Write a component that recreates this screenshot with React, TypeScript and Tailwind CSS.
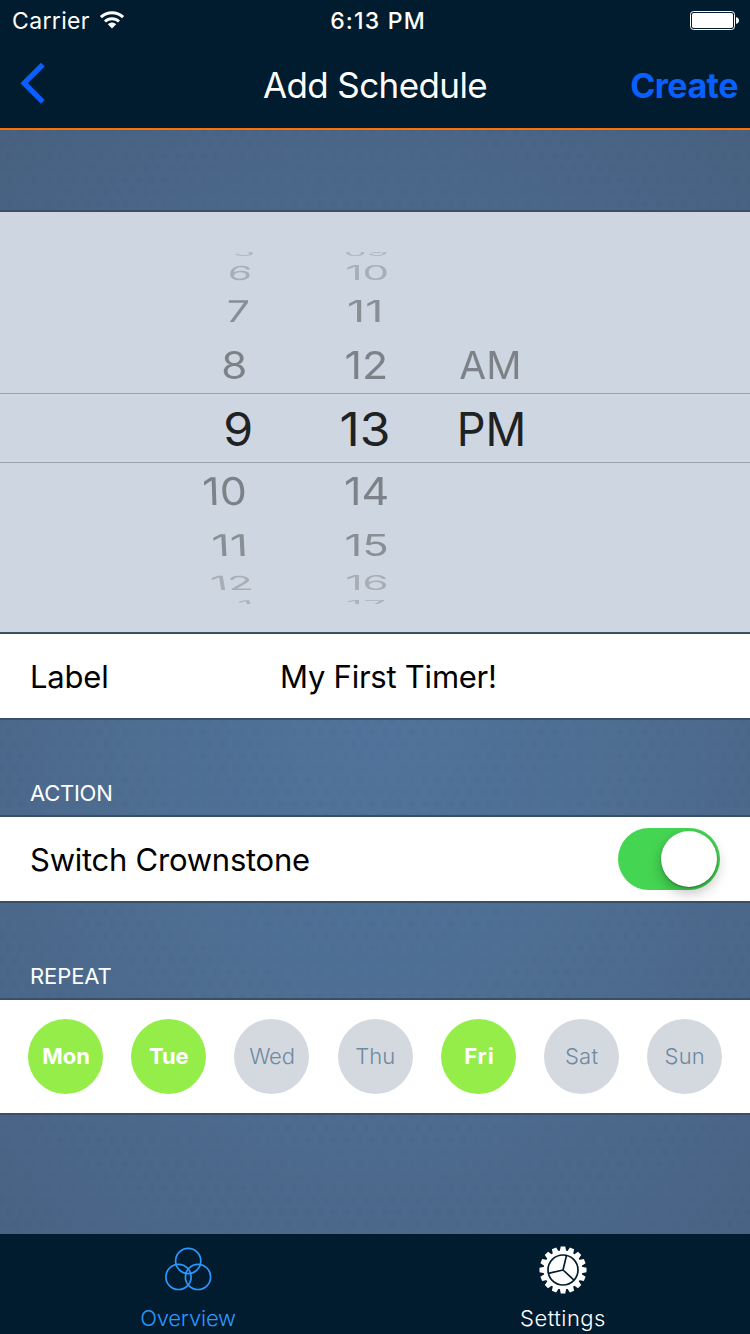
import React from 'react';

type Cell = { text: string; dx?: number; sx?: number; skew?: number };
type WheelRow = {
  height: number;
  dy: number;
  sy: number;
  opacity: number;
  selected?: boolean;
  gapBefore?: number;
  cells: [Cell, Cell, Cell];
};

const none: Cell = { text: '' };

const wheel: WheelRow[] = [
  { height: 4, dy: -2.5, sy: 0.27, opacity: 0.3, cells: [{ text: '5', dx: 4, sx: 0.95 }, { text: '09', dx: 1, sx: 0.92 }, none] },
  { height: 34, dy: -0.5, sy: 0.5, opacity: 0.4, cells: [{ text: '6', dx: 0, skew: -6 }, { text: '10', dx: 2, sx: 1.08 }, none] },
  { height: 42, dy: -0.3, sy: 0.77, opacity: 0.72, cells: [{ text: '7', dx: -2, skew: -3, sx: 1.05 }, { text: '11', dx: 0.3, sx: 1.14 }, none] },
  { height: 61, dy: 2.3, sy: 0.99, opacity: 0.85, cells: [{ text: '8', dx: -5.7, sx: 1.08 }, { text: '12', dx: 1.5, sx: 1.1 }, { text: 'AM', dx: 0.3 }] },
  { height: 68, dy: 0.5, sy: 1, opacity: 1, selected: true, cells: [{ text: '9', dx: -2, sx: 1.05 }, { text: '13', dx: 0.5, sx: 1.08 }, { text: 'PM', dx: 1, sx: 0.98 }] },
  { height: 55, dy: 0, sy: 0.98, opacity: 0.85, cells: [{ text: '10', dx: -15.7, sx: 1.1, skew: 2 }, { text: '14', dx: 2, sx: 1.1 }, none] },
  { height: 54, dy: -0.5, sy: 0.77, opacity: 0.72, cells: [{ text: '11', dx: -10, sx: 1.14, skew: 3 }, { text: '15', dx: 1.8, sx: 1.12 }, none] },
  { height: 22, dy: -0.3, sy: 0.5, opacity: 0.4, cells: [{ text: '12', dx: -8, sx: 1.08, skew: 10 }, { text: '16', dx: 2, sx: 1.08 }, none] },
  { height: 4, dy: 2, sy: 0.27, opacity: 0.35, gapBefore: 6, cells: [{ text: '1', dx: 6, skew: 20 }, { text: '17', dx: 1, sx: 1.05 }, none] },
];

const days = [
  { name: 'Mon', on: true, track: 'pl-px tracking-normal' },
  { name: 'Tue', on: true, track: 'tracking-[-0.15px]' },
  { name: 'Wed', on: false, track: 'tracking-[-0.2px]' },
  { name: 'Thu', on: false, track: 'tracking-normal' },
  { name: 'Fri', on: true, track: 'pl-0.5 tracking-[0.9px]' },
  { name: 'Sat', on: false, track: 'tracking-[0.2px]' },
  { name: 'Sun', on: false, track: 'tracking-[0.2px]' },
];

function Picker() {
  return (
    <div className="h-[424px] shrink-0 border-y-2 border-[#3a4f67] bg-[#ced6e1] pt-10 text-[#1f2223]">
      {wheel.map((row, i) => (
        <div
          key={i}
          className={
            row.selected
              ? 'box-content grid grid-cols-[200px_80px_50px_70px_55px_70px] overflow-hidden border-y border-[#98a1ad] text-[46px]'
              : 'grid grid-cols-[200px_80px_50px_70px_55px_70px] overflow-hidden text-[39px] text-[#6e7478]'
          }
          style={{ height: row.height, marginTop: row.gapBefore ?? 0 }}
        >
          {row.cells.map((cell, c) => (
            <React.Fragment key={c}>
              <div />
              <div className="flex items-center justify-center" style={{ height: row.height }}>
                <span
                  className="block leading-none whitespace-nowrap"
                  style={{
                    opacity: row.opacity,
                    transform: `translate(${cell.dx ?? 0}px, ${row.dy}px) skewX(${cell.skew ?? 0}deg) scale(${cell.sx ?? 1}, ${row.sy})`,
                  }}
                >
                  {cell.text}
                </span>
              </div>
            </React.Fragment>
          ))}
        </div>
      ))}
    </div>
  );
}

function WifiIcon() {
  return (
    <svg className="mb-0.5 ml-[9px] h-[19px] w-[26px]" viewBox="0 0 26 19" fill="none" stroke="#fff">
      <path d="M1.9 7.1a16.1 16.1 0 0 1 22.2 0" strokeWidth="3" />
      <path d="M6 11.5a10.2 10.2 0 0 1 14 0" strokeWidth="2.9" />
      <path d="M13 18.6 8.8 14.2a6.2 6.2 0 0 1 8.4 0Z" fill="#fff" stroke="none" />
    </svg>
  );
}

function BatteryIcon() {
  return (
    <svg className="h-5 w-[50px]" viewBox="0 0 50 20">
      <rect x="0.5" y="1.5" width="44" height="18" rx="3" fill="none" stroke="#fff" />
      <rect x="2" y="3" width="41" height="15" rx="1.8" fill="#fff" />
      <path d="M46 7.2c1.8.2 3 1.5 3 3.3s-1.2 3.1-3 3.3Z" fill="#fff" />
    </svg>
  );
}

function GearIcon() {
  return (
    <svg className="size-12" viewBox="-24 -24 48 48">
      <circle r="19.4" fill="#fff" />
      {Array.from({ length: 16 }, (_, i) => (
        <path key={i} d="M-3.2 -18.5L-2.3 -23.5H2.3L3.2 -18.5Z" fill="#fff" transform={`rotate(${i * 22.5})`} />
      ))}
      <g fill="none" stroke="#001c2e" strokeWidth="1.7">
        <circle r="15" />
        <path d="M0 0 3.5 -14.6M0 0-14.6 3.4M0 0 11 10.2" />
      </g>
    </svg>
  );
}

function CirclesIcon() {
  return (
    <svg className="size-12" viewBox="0 0 48 48" fill="none" stroke="#2b97ff" strokeWidth="1.7">
      <circle cx="24.2" cy="15" r="12.6" />
      <circle cx="14.5" cy="30.9" r="12.6" />
      <circle cx="34" cy="30.9" r="12.6" />
    </svg>
  );
}

export default function App() {
  return (
    <div className="relative isolate flex h-[1334px] w-[750px] flex-col overflow-hidden bg-[radial-gradient(ellipse_680px_900px_at_375px_730px,#51739b_0%,#4e6e92_35%,#4a6587_68%,#465e7c_100%)] font-['Inter',sans-serif] text-white">
      <div className="absolute inset-0 -z-10 bg-[radial-gradient(circle,#35527855_0_3px,transparent_3.8px),radial-gradient(circle,#35527855_0_3px,transparent_3.8px)] bg-[length:13px_24px] bg-[position:2px_0px,8.5px_12px] opacity-25 [mask-image:repeating-radial-gradient(circle_at_375px_620px,#000_0px,#0003_50px,#000_100px)]" />

      <header className="h-[130px] shrink-0 border-b-2 border-[#fd7003] bg-[#001c2e]">
        <div className="grid h-10 grid-cols-3 items-center pr-[10px] pl-3">
          <div className="flex items-center">
            <span className="pt-px text-[23px] leading-[40px] tracking-[0.35px]">Carrier</span>
            <WifiIcon />
          </div>
          <span className="pt-px pl-1 text-center text-[23px] leading-[40px] font-medium tracking-[1.2px]">6:13 PM</span>
          <div className="flex justify-end pb-0.5">
            <BatteryIcon />
          </div>
        </div>
        <div className="grid h-[88px] grid-cols-[200px_350px_200px]">
          <svg className="mt-[22px] ml-[18px] h-[42px] w-7" viewBox="0 0 28 42" fill="none" stroke="#0a60ff" strokeWidth="5.3">
            <path d="M24.8 2.6 6.2 21.2 24.8 39.9" />
          </svg>
          <h1 className="text-center text-[35px] leading-[90px] tracking-[-0.6px]">Add Schedule</h1>
          <span className="pr-[12px] text-right text-[34px] leading-[91px] font-bold tracking-[-0.5px] text-[#0a60ff]">Create</span>
        </div>
      </header>

      <div className="h-20 shrink-0" />
      <Picker />

      <div className="flex h-[86px] shrink-0 items-center border-b-2 border-[#3a4f67] bg-white text-[31px] text-black">
        <span className="w-[280px] pt-0.5 pl-[30px] tracking-[-0.2px]">Label</span>
        <span className="pt-0.5 tracking-[-0.24px]">My First Timer!</span>
      </div>

      <div className="flex h-[95px] shrink-0 items-end pb-[5px] pl-[30px] text-[22px] leading-[34px] tracking-[-0.25px]">ACTION</div>

      <div className="flex h-[88px] shrink-0 items-center justify-between border-y-2 border-[#3a4f67] bg-white pr-[30px] pl-[30px] text-[31px] text-black">
        <span className="pt-0.5 tracking-[-0.25px]">Switch Crownstone</span>
        <div className="flex h-[62px] w-[102px] items-center justify-end rounded-full bg-[#44d552] pr-[3px]">
          <div className="size-[56.5px] rounded-full bg-white shadow-[0_1px_2px_rgba(0,0,0,0.3),0_6px_14px_rgba(0,0,0,0.26)]" />
        </div>
      </div>

      <div className="flex h-[95px] shrink-0 items-end pb-[5px] pl-[30px] text-[22px] leading-[34px] tracking-[-0.1px]">REPEAT</div>

      <div className="flex h-[117px] shrink-0 items-center justify-between border-y-2 border-[#3a4f67] bg-white pr-[27.7px] pl-7">
        {days.map((d) => (
          <div
            key={d.name}
            className={`flex size-[75px] items-center justify-center rounded-full text-[22px] ${d.track} ${
              d.on ? 'bg-[#95ed49] font-bold text-white' : 'bg-[#d4d9e0] font-light text-[#7088a0]'
            }`}
          >
            {d.name}
          </div>
        ))}
      </div>

      <div className="flex-1" />

      <nav className="grid h-[100px] shrink-0 grid-cols-2 bg-[#001c2e] text-[22px] font-light">
        <div className="flex flex-col items-center pt-3 text-[#2b97ff]">
          <CirclesIcon />
          <span className="mt-[7px] pl-px leading-[34px] tracking-[-0.2px]">Overview</span>
        </div>
        <div className="flex flex-col items-center pt-3">
          <div className="pl-px">
            <GearIcon />
          </div>
          <span className="mt-[7px] pl-px leading-[34px] tracking-[0.48px]">Settings</span>
        </div>
      </nav>
    </div>
  );
}
